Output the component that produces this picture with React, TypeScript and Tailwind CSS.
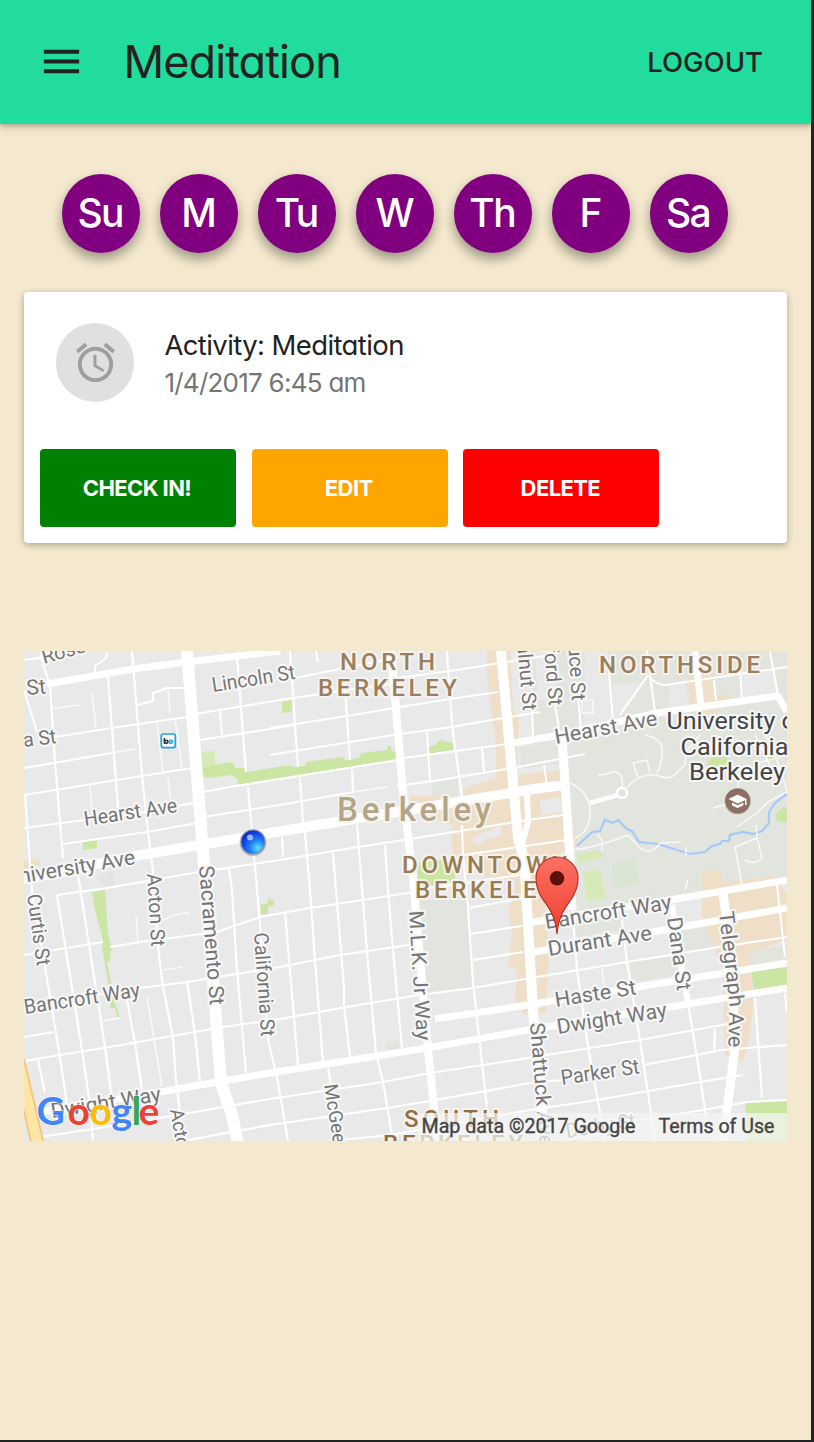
import React from "react";

const days = ["Su", "M", "Tu", "W", "Th", "F", "Sa"];

const arterials: [string, number][] = [
  ["M47 684L133 669L187 662L280 651", 7],
  ["M187 651L203 852L215 1005L221 1083L232 1115L238 1143", 12],
  ["M20 880L135 856L270 833L540 788L567 785", 10],
  ["M391 651L403 792L413 878L415 900L428 1050L434 1107L437 1141", 8],
  ["M501 651L512 772L518 838L525 862L526 890L533 1010L537 1060L545 1141", 10],
  ["M527 793L528 822L521 848", 6],
  ["M562 738L570 858L572 910", 9],
  ["M513 743L560 735L657 713L778 696L787 712", 7],
  ["M695 651L701 707", 7],
  ["M24 1115L160 1092L270 1073L427 1048L528 1030L663 1008L787 988", 7],
  ["M435 1019L528 1005L637 987L787 963", 7],
  ["M528 953L653 932L787 908", 7],
  ["M528 923L670 900L787 880", 7],
  ["M723 893L732 960L735 1047L723 1141", 9],
  ["M672 905L680 957L688 1003", 6],
];

const streets = [
  "M24 660L40 658 M55 737L112 728L187 717 M195 714L280 700L347 690L398 683",
  "M270 728L347 716L400 707L450 699L498 692 M270 755L350 742L400 734L452 727L503 718L540 712",
  "M236 786L398 760 M203 792L240 785 M203 817L280 805L353 792 M397 786L433 781L513 768L585 754",
  "M280 681L350 667L398 657 M398 678L457 670L500 663L550 655 M403 758L500 745L513 743",
  "M57 895L107 888L193 873L280 860L358 847L410 839L460 831L515 822L563 815 M463 855L567 840 M415 890L540 872",
  "M24 768L112 753 M24 795L117 780L192 768 M200 740L295 725 M24 828L85 820L145 812L193 803 M63 844L147 832L197 823",
  "M24 955L103 942 M110 947L147 941L217 932L260 917L310 908L415 892",
  "M24 1006L140 988L187 982L280 967L340 955L415 944",
  "M24 1061L133 1043L223 1027L280 1019L347 1007L413 996L473 988L537 977L627 962L713 948L787 937 M24 1037L53 1032",
  "M160 1118L270 1099L383 1082L430 1073L483 1065L528 1058L640 1040L727 1024",
  "M40 1137L93 1129L165 1117 M177 1142L270 1125L387 1108L430 1101L530 1083L562 1080 M643 1065L697 1055L720 1050L787 1045",
  "M340 1140L390 1135L530 1110L597 1100L648 1091L700 1082L743 1075 M640 1120L703 1110L747 1102L787 1100",
  "M468 908L530 897 M470 934L522 926 M473 960L523 952",
  "M40 655L50 685L55 762L63 858 M24 690L37 732 M108 677L118 808 M132 651L142 775L148 832L153 872L158 947L163 987L173 1037L176 1080L182 1130",
  "M107 652L106 658L95 666L95 675 M137 705L153 701L153 693L167 688L183 688 M237 657L246 772 M220 710L222 735",
  "M248 787L253 845L260 923L268 1040L277 1077L288 1141 M229 868L232 890L237 970L246 1073",
  "M25 795L32 892L45 967L60 1057L67 1105 M77 868L105 1047L112 1100 M57 895L82 1050L90 1105L93 1141 M127 1000L135 1043L142 1090 M187 982L195 1033L200 1082 M38 1060L45 1093",
  "M290 651L295 725L298 767 M300 778L303 822 M305 832L310 890L315 960L323 1063 M316 651L318 662 M345 690L350 760 M352 770L353 792 M357 825L367 952L376 1053L383 1082L392 1135",
  "M333 853L336 890L344 987L344 1005L350 1057 M385 845L388 890L393 950L402 1048 M285 912L298 1065 M328 1068L331 1085 M282 837L283 857",
  "M447 651L452 725L462 797 M462 825L463 855L468 908L473 983L487 1107 M427 732L430 782 M482 748L484 772 M532 708L533 738 M544 765L547 785",
  "M555 705L560 735 M578 698L581 728 M609 670L613 722 M647 651L655 712 M648 675L620 715 M648 675Q657 688 672 684L713 678L787 667 M740 670L742 698 M770 652L778 695 M714 680L716 700",
  "M572 905L577 970L588 1047L602 1123L605 1141 M622 920L627 962L640 1040L655 1140 M688 1003L697 1057L708 1130 M777 885L785 957 M755 998L762 1098 M715 1028L714 1053 M785 993L787 1013",
];

const lanes = [
  "M50 709L79 705 M112 753L135 749 M353 792L387 787 M147 997L162 1087",
  "M92 693L96 728 M157 722L163 772 M175 718L182 768 M168 690L170 713 M90 785L92 812 M168 777L170 798 M136 916L138 942 M163 920Q176 914 180 914Q186 911 190 915 M163 970L182 967 M103 1021L120 1018",
  "M570 783Q590 792 590 812Q590 832 575 838 M622 788Q624 775 616 772Q610 771 608 774L598 775 M627 787Q640 773 657 775Q670 782 677 772L685 765",
  "M638 777L633 763L647 760L650 773 M657 773Q663 762 662 748Q660 738 645 735 M567 850Q590 850 628 835L640 848Q652 856 660 843L681 842 M602 851L602 840L597 834",
  "M737 827L757 813L768 802L787 792 M735 847L742 885 M735 847L757 838L762 857Q758 866 745 860 M765 735Q775 750 787 792 M713 808L735 802L739 780 M755 735L770 765 M755 764L787 755 M685 890L688 880 M602 968L604 985 M686 847L686 855 M756 825L757 836",
  "M685 765L687 750L700 735",
];

const greens = [
  "202,767 233,762 235,768 246,768 247,772 290,765 292,767 305,766 306,762 343,757 345,760 359,758 361,753 387,750 388,746 391,746 391,751 398,752 398,759 238,785 237,779 232,775 208,778 202,776",
  "428,747 435,745 440,740 453,743 453,750 428,754",
  "282,702 292,700 292,712 282,713",
  "417,863 457,858 455,878 445,884 418,887",
  "83,842 97,840 97,848 83,850",
  "92,892 105,890 108,933 112,949 110,953 111,960 107,962 115,1003 120,1017 117,1017 115,1008 110,1008 111,1000 102,947 103,940 95,910",
  "260,905 267,904 268,899 274,900 274,905 268,907 268,914 261,914",
  "707,762 713,757 727,757 728,770 708,774",
  "775,815 783,807 787,807 787,823 777,821",
  "767,755 777,752 777,759 767,760",
  "751,972 787,967 787,985 754,990",
  "745,1103 787,1099 787,1141 747,1141",
];

type Label = { t: string; x: number; y: number; r: number; s?: number; len?: number; end?: boolean };

const roadLabels: Label[] = [
  { t: "Rose St", x: 44, y: 664, r: -16, s: 20 },
  { t: "St", x: 27, y: 695, r: -5, s: 21 },
  { t: "a St", x: 24, y: 747, r: -7, s: 20, len: 33 },
  { t: "Lincoln St", x: 213, y: 692, r: -9, len: 84 },
  { t: "Hearst Ave", x: 85, y: 826, r: -8.6, len: 94 },
  { t: "University Ave", x: 136, y: 864, r: -9.5, s: 21, end: true },
  { t: "Curtis St", x: 27, y: 895, r: 82, len: 72, s: 20 },
  { t: "Acton St", x: 147, y: 874, r: 86.5, len: 73, s: 20 },
  { t: "Sacramento St", x: 199, y: 866, r: 85.5, len: 140, s: 21 },
  { t: "California St", x: 254, y: 933, r: 86, len: 104, s: 20 },
  { t: "Bancroft Way", x: 25, y: 1014, r: -8.6, len: 117 },
  { t: "Dwight Way", x: 52, y: 1118, r: -9, len: 111 },
  { t: "Acton St", x: 170, y: 1110, r: 80, s: 19 },
  { t: "McGee Ave", x: 324, y: 1085, r: 81, s: 19 },
  { t: "M.L.K. Jr Way", x: 409, y: 911, r: 86.5, len: 130 },
  { t: "Shattuck Ave", x: 530, y: 1023, r: 85.5, len: 124 },
  { t: "Walnut St", x: 523, y: 711, r: 85, s: 20, end: true },
  { t: "Oxford St", x: 549, y: 706, r: 85, s: 20, end: true },
  { t: "Spruce St", x: 572, y: 701, r: 86, s: 20, end: true },
  { t: "Hearst Ave", x: 556, y: 744, r: -10.5, s: 21, len: 104 },
  { t: "Bancroft Way", x: 546, y: 929, r: -9, s: 21, len: 128 },
  { t: "Durant Ave", x: 549, y: 956, r: -9, s: 21, len: 105 },
  { t: "Haste St", x: 556, y: 1007, r: -9, s: 21, len: 82 },
  { t: "Dwight Way", x: 558, y: 1034, r: -9, s: 21, len: 111 },
  { t: "Parker St", x: 562, y: 1085, r: -8.5, len: 79, s: 21 },
  { t: "Derby St", x: 567, y: 1138, r: -9, len: 70 },
  { t: "Dana St", x: 667, y: 918, r: 82, len: 74, s: 21 },
  { t: "Telegraph", x: 719, y: 912, r: 83.5, len: 96, s: 21 },
  { t: "Ave", x: 729, y: 1012, r: 91, len: 35, s: 21 },
];

const areaLabels: [string, number, number, number, number, string][] = [
  ["NORTH", 340, 670, 95, 24, "#9c7d5c"],
  ["BERKELEY", 318, 696, 139, 24, "#9c7d5c"],
  ["NORTHSIDE", 599, 673, 161, 24, "#9c7d5c"],
  ["DOWNTOWN", 402, 873, 166, 24, "#9a7c52"],
  ["BERKELEY", 415, 898, 140, 24, "#9a7c52"],
  ["SOUTH", 404, 1127, 95, 24, "#8e6f43"],
  ["BERKELEY", 383, 1152, 140, 24, "#8e6f43"],
  ["Berkeley", 337, 821, 154, 33, "#b4a587"],
];

function BerkeleyMap() {
  return (
    <svg className="block h-[490px] w-full font-['Roboto',sans-serif]" viewBox="24 651 763 490" preserveAspectRatio="none">
      <defs>
        <radialGradient id="ball" cx="0.7" cy="0.75" r="0.75">
          <stop offset="0" stopColor="#5fe0ff" />
          <stop offset="0.45" stopColor="#1e7dfa" />
          <stop offset="1" stopColor="#1028d8" />
        </radialGradient>
        <linearGradient id="pin" x1="0" y1="0" x2="0" y2="1">
          <stop offset="0" stopColor="#fb7064" />
          <stop offset="1" stopColor="#f0402f" />
        </linearGradient>
      </defs>
      <rect x="24" y="651" width="763" height="490" fill="#e9e9e9" />
      <g fill="#e2e4de">
        <polygon points="533,651 787,651 787,880 670,900 570,918 562,742 533,746" />
        <polygon points="519,747 562,742 564,764 522,768" />
        <polygon points="432,783 458,779 458,797 432,799" />
        <polygon points="418,900 467,900 473,987 428,992" />
        <polygon points="573,923 620,917 622,930 578,937" />
        <polygon points="680,930 707,927 712,948 683,953" />
        <polygon points="630,962 673,957 676,975 632,982" />
        <polygon points="386,1043 398,1040 400,1048 387,1050" />
        <polygon points="99,875 113,871 115,886 101,888" />
      </g>
      <g fill="#e9e9e9">
        <polygon points="613,684 645,682 622,714 613,720" />
        <polygon points="585,651 608,651 613,722 583,730" />
        <polygon points="742,672 774,668 778,692 743,698" />
        <polygon points="535,651 552,651 558,700 538,700" />
        <polygon points="670,684 685,682 688,705 668,709" />
      </g>
      <g fill="#f0dfc8">
        <polygon points="487,651 510,651 513,712 519,715 517,775 560,770 568,795 576,845 548,860 545,900 549,958 546,1012 523,1015 515,1000 517,970 508,967 512,930 508,910 514,895 515,880 485,878 482,860 452,855 452,825 410,812 410,796 457,797 465,788 496,778 496,745 492,712 487,680" />
        <polygon points="687,675 713,673 713,695 728,695 730,705 710,715 690,708" />
        <polygon points="702,872 720,868 723,882 775,876 787,895 787,940 750,953 752,983 753,1010 748,1043 743,1062 725,1055 723,1000 723,970 708,933 702,918" />
        <polygon points="24,862 39,859 40,865 24,868" />
      </g>
      <g fill="#e9e9e9">
        <polygon points="473,837 500,826 502,835 482,841 480,845 473,844" />
        <polygon points="540,800 560,797 561,812 541,815" />
      </g>
      <polygon points="748,953 787,944 787,960 750,967" fill="#e2e4de" />
      {greens.map((p) => (
        <polygon key={p} points={p} fill="#cbe6a3" />
      ))}
      <g fill="#d6eab8">
        <polygon points="201,752 215,751 215,765 202,767" />
        <polygon points="577,853 602,851 603,858 578,863" />
        <polygon points="583,872 600,869 605,898 587,901" />
        <polygon points="611,864 635,860 639,885 615,887" fill="#d9e5d0" />
      </g>
      <path
        d="M577 846L592 832L600 831L605 820L613 823L618 820L627 829L632 831L639 842L658 844L690 854L705 852L712 846L720 844L722 841L729 841L730 835L743 832L753 834L762 831L769 823L769 812L775 803L787 794"
        fill="none" stroke="#a4c9fb" strokeWidth="2.2"
      />
      <g fill="none" stroke="#fff" strokeLinejoin="round">
        <g strokeWidth="1.5" strokeOpacity="0.8">{lanes.map((d) => <path key={d} d={d} />)}</g>
        <g strokeWidth="2.1">{streets.map((d) => <path key={d} d={d} />)}</g>
        {arterials.map(([d, w]) => <path key={d} d={d} strokeWidth={w} />)}
        <path d="M590 803L618 795" strokeWidth="4.5" />
        <circle cx="622" cy="793" r="5" strokeWidth="2.4" fill="#e2e4de" />
        <rect x="582" y="700" width="11" height="13" strokeWidth="1.2" />
      </g>
      <path d="M18 1060L38 1145" stroke="#edca84" strokeWidth="14" />
      <path d="M18 1060L38 1145" stroke="#ffe6a3" strokeWidth="10" />

      <g fill="#757575" stroke="#f7f7f7" strokeWidth="4" strokeLinejoin="round" paintOrder="stroke">
        {roadLabels.map((l, i) => (
          <text
            key={i}
            transform={`translate(${l.x} ${l.y}) rotate(${l.r})`}
            fontSize={l.s ?? 20.5}
            textLength={l.len}
            lengthAdjust="spacingAndGlyphs"
            textAnchor={l.end ? "end" : "start"}
          >
            {l.t}
          </text>
        ))}
      </g>
      <g fontWeight="500" stroke="#f7f5f1" strokeOpacity="0.85" strokeWidth="4" strokeLinejoin="round" paintOrder="stroke">
        {areaLabels.map(([t, x, y, len, size, fill], i) => (
          <text key={i} x={x} y={y} textLength={len} fontSize={size} fill={fill}>{t}</text>
        ))}
      </g>
      <g fill="#444" stroke="#f7f7f7" strokeWidth="4" strokeLinejoin="round" paintOrder="stroke" fontSize="24.5">
        <text x="666.5" y="729" textLength="138" lengthAdjust="spacingAndGlyphs">University of</text>
        <text x="680.5" y="755" textLength="108" lengthAdjust="spacingAndGlyphs">California</text>
        <text x="689" y="780" textLength="96" lengthAdjust="spacingAndGlyphs">Berkeley</text>
      </g>

      <circle cx="737.7" cy="801.3" r="13" fill="#6d5148" fillOpacity="0.5" />
      <circle cx="737.7" cy="800.7" r="12.3" fill="#8d6e63" />
      <path d="M728.5 799L737.7 794.5L746.5 799V805H745V800.2L737.7 803.5ZM732 802.5L737.7 805.2L743.3 802.5V805.5L737.7 808L732 805.5Z" fill="#fff" />

      <rect x="161.3" y="734" width="14" height="13.6" rx="2" fill="#fff" stroke="#1ba4e2" strokeWidth="1.7" />
      <g fill="none" strokeWidth="1.6">
        <path d="M164.4 738V743.8" stroke="#333" />
        <circle cx="166.3" cy="741.8" r="1.6" stroke="#333" />
        <circle cx="170.7" cy="741.8" r="1.6" stroke="#1ba4e2" />
      </g>

      <circle cx="253" cy="842.5" r="13.3" fill="#8a8a8a" fillOpacity="0.6" />
      <circle cx="253" cy="842" r="12" fill="url(#ball)" stroke="#7f8ba0" strokeWidth="1" />
      <circle cx="250" cy="837.5" r="3" fill="#c8ddff" fillOpacity="0.75" />

      <path
        d="M557 934C555.5 916 549 908 543 899.5C538.5 893 536 886 536 878A21 21 0 0 1 578 878C578 886 575.5 893 571 899.5C565 908 558.5 916 557 934Z"
        fill="url(#pin)" stroke="#b52f27" strokeWidth="1.2"
      />
      <circle cx="557" cy="878.3" r="7.2" fill="#5c100c" />

      <text
        y="1125.3" x="36.5 67.5 89.5 111.5 131.5 138.5" fontSize="39" className="font-['Lato',sans-serif]" fontWeight="700"
        stroke="#fff" strokeWidth="1.5" strokeOpacity="0.6" paintOrder="stroke"
      >
        <tspan fill="#4285f4">G</tspan>
        <tspan fill="#ea4335">o</tspan>
        <tspan fill="#fbbc05">o</tspan>
        <tspan fill="#4285f4">g</tspan>
        <tspan fill="#34a853">l</tspan>
        <tspan fill="#ea4335">e</tspan>
      </text>
      <rect x="418" y="1113" width="369" height="28" fill="#f5f5f5" fillOpacity="0.72" />
      <g fill="#444" stroke="#444" strokeWidth="0.35" fontSize="19.5">
        <text x="421.5" y="1133.3" textLength="214" lengthAdjust="spacingAndGlyphs">Map data ©2017 Google</text>
        <text x="658.5" y="1133.3" textLength="116" lengthAdjust="spacingAndGlyphs">Terms of Use</text>
      </g>
    </svg>
  );
}

export default function App() {
  return (
    <div className="h-[1442px] w-[814px] overflow-hidden bg-[#222] pr-[3px] pb-0.5 font-['Inter',sans-serif]">
      <div className="flex h-[1440px] w-[811px] flex-col overflow-hidden bg-[#f4e9ce]">
        <header className="flex h-[123.5px] shrink-0 items-center bg-[#22dc9d] pr-12 pb-px pl-[38px] text-[#222] shadow-[0_2px_4px_rgba(0,0,0,0.2),0_4px_10px_rgba(0,0,0,0.12)]">
          <svg className="size-[47px] shrink-0" viewBox="0 0 24 24" fill="currentColor">
            <path d="M3 18h18v-2H3v2zm0-5h18v-2H3v2zm0-7v2h18V6H3z" />
          </svg>
          <h1 className="ml-[38.5px] flex-1 text-[45px] leading-none font-[370] tracking-[-0.9px] whitespace-nowrap [font-feature-settings:'cv11']">Meditation</h1>
          <button className="pt-0.5 text-[27.5px] leading-none font-medium">LOGOUT</button>
        </header>

        <nav className="mt-[50.8px] ml-[62px] flex shrink-0 gap-[19.6px]">
          {days.map((d) => (
            <button
              key={d}
              className="flex size-[78.4px] items-center justify-center rounded-full bg-[#800080] pr-0.5 text-[39px] font-medium tracking-[-1.6px] text-white shadow-[0_6px_12px_rgba(0,0,0,0.23),0_6px_12px_rgba(0,0,0,0.16)]"
            >
              {d}
            </button>
          ))}
        </nav>

        <section className="mx-6 mt-[39px] flex h-[251px] shrink-0 flex-col rounded bg-white px-4 pt-[31.5px] pb-4 shadow-[0_2px_6px_rgba(0,0,0,0.2),0_2px_8px_rgba(0,0,0,0.12)]">
          <div className="flex flex-1 items-start pl-4">
            <div className="flex size-[78.4px] items-center justify-center rounded-full bg-[#e0e0e0] text-[#9e9e9e]">
              <svg className="size-[47px]" viewBox="0 0 24 24" fill="currentColor">
                <path d="M22 5.72l-4.6-3.86-1.29 1.53 4.6 3.86L22 5.72zM7.88 3.39L6.6 1.86 2 5.71l1.29 1.53 4.59-3.85zM12.5 8H11v6l4.75 2.85.75-1.23-4-2.37V8zM12 4c-4.97 0-9 4.03-9 9s4.02 9 9 9a9 9 0 0 0 0-18zm0 16c-3.87 0-7-3.13-7-7s3.13-7 7-7 7 3.13 7 7-3.13 7-7 7z" />
              </svg>
            </div>
            <div className="ml-[30px] pt-1 whitespace-nowrap [font-feature-settings:'cv11']">
              <p className="text-[27.5px] leading-[37px] font-[380] tracking-[-0.6px] text-[#222]">Activity: Meditation</p>
              <p className="text-[26px] leading-[37px] font-[370] tracking-[-0.75px] text-[#757575]">1/4/2017 6:45 am</p>
            </div>
          </div>
          <div className="flex gap-[15.7px] text-[22px] font-bold tracking-[-0.6px] text-white">
            <button className="h-[78px] w-[196px] rounded bg-[#008000] pt-0.5 pr-0.5">CHECK IN!</button>
            <button className="h-[78px] w-[196px] rounded bg-[#ffa500] pt-0.5 pr-0.5">EDIT</button>
            <button className="h-[78px] w-[196px] rounded bg-[#ff0000] pt-0.5 pr-0.5">DELETE</button>
          </div>
        </section>

        <div className="mx-6 mt-[108px] shrink-0">
          <BerkeleyMap />
        </div>
      </div>
    </div>
  );
}
